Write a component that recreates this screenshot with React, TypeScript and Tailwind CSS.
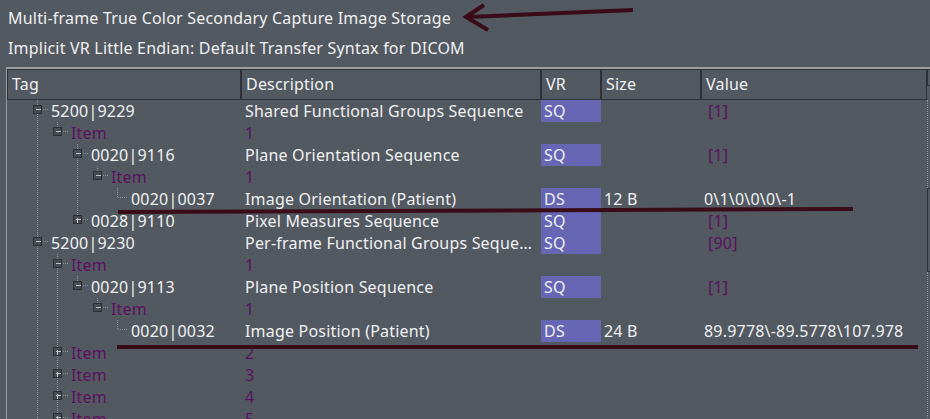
type Kind = 'open' | 'closed' | 'leaf';

type Row = {
  level: number;
  kind: Kind;
  more: boolean; // has later siblings
  guides: boolean[]; // ancestor lines that keep going
  tag: string;
  item?: boolean;
  desc: string;
  vr?: string;
  size?: string;
  value?: string;
  count?: boolean;
};

const ROWS: Row[] = [
  { level: 0, kind: 'open', more: true, guides: [], tag: '5200|9229', desc: 'Shared Functional Groups Sequence', vr: 'SQ', value: '[1]', count: true },
  { level: 1, kind: 'open', more: false, guides: [true], tag: 'Item', item: true, desc: '1' },
  { level: 2, kind: 'open', more: true, guides: [true, false], tag: '0020|9116', desc: 'Plane Orientation Sequence', vr: 'SQ', value: '[1]', count: true },
  { level: 3, kind: 'open', more: false, guides: [true, false, true], tag: 'Item', item: true, desc: '1' },
  { level: 4, kind: 'leaf', more: false, guides: [true, false, true, false], tag: '0020|0037', desc: 'Image Orientation (Patient)', vr: 'DS', size: '12 B', value: '0\\1\\0\\0\\0\\-1' },
  { level: 2, kind: 'closed', more: false, guides: [true, false], tag: '0028|9110', desc: 'Pixel Measures Sequence', vr: 'SQ', value: '[1]', count: true },
  { level: 0, kind: 'open', more: true, guides: [], tag: '5200|9230', desc: 'Per-frame Functional Groups Seque…', vr: 'SQ', value: '[90]', count: true },
  { level: 1, kind: 'open', more: true, guides: [true], tag: 'Item', item: true, desc: '1' },
  { level: 2, kind: 'open', more: false, guides: [true, true], tag: '0020|9113', desc: 'Plane Position Sequence', vr: 'SQ', value: '[1]', count: true },
  { level: 3, kind: 'open', more: false, guides: [true, true, false], tag: 'Item', item: true, desc: '1' },
  { level: 4, kind: 'leaf', more: false, guides: [true, true, false, false], tag: '0020|0032', desc: 'Image Position (Patient)', vr: 'DS', size: '24 B', value: '89.9778\\-89.5778\\107.978' },
  { level: 1, kind: 'closed', more: true, guides: [true], tag: 'Item', item: true, desc: '2' },
  { level: 1, kind: 'closed', more: true, guides: [true], tag: 'Item', item: true, desc: '3' },
  { level: 1, kind: 'closed', more: true, guides: [true], tag: 'Item', item: true, desc: '4' },
  { level: 1, kind: 'closed', more: true, guides: [true], tag: 'Item', item: true, desc: '5' },
];

const LINE = '#8d9298';

function Branch({ row }: { row: Row }) {
  const w = 44 + row.level * 20;
  const cx = 30.5 + row.level * 20;
  const cy = 9.5;
  const leaf = row.kind === 'leaf';
  return (
    <svg width={w} height={22} className="shrink-0" shapeRendering="crispEdges">
      {row.guides.map((on, j) =>
        on ? (
          <line key={j} x1={30.5 + j * 20} y1={0} x2={30.5 + j * 20} y2={22} stroke={LINE} strokeDasharray="1 1" />
        ) : null,
      )}
      <line x1={cx} y1={0} x2={cx} y2={leaf ? cy : 5} stroke={LINE} strokeDasharray="1 1" />
      {row.more && <line x1={cx} y1={leaf ? cy : 14} x2={cx} y2={22} stroke={LINE} strokeDasharray="1 1" />}
      <line x1={leaf ? cx : cx + 5} y1={cy} x2={cx + 10} y2={cy} stroke={LINE} strokeDasharray="1 1" />
      {!leaf && (
        <>
          <rect x={cx - 4} y={cy - 4} width={8} height={8} fill="#474c53" stroke="#2b2f34" />
          <line x1={cx - 2} y1={cy} x2={cx + 3} y2={cy} stroke="#c3c7cb" />
          {row.kind === 'closed' && <line x1={cx} y1={cy - 2} x2={cx} y2={cy + 3} stroke="#c3c7cb" />}
        </>
      )}
    </svg>
  );
}

function TreeRow({ row }: { row: Row }) {
  const purple = 'text-[#5b1160]';
  return (
    <div className="flex h-[22px] items-center whitespace-nowrap leading-[22px]">
      <div className="flex w-[234px] shrink-0 items-center overflow-hidden">
        <Branch row={row} />
        <span className={row.item ? purple : ''}>{row.tag}</span>
      </div>
      <div className={`w-[300px] shrink-0 overflow-hidden pl-[4px] ${row.item ? purple : ''}`}>{row.desc}</div>
      <div className={`h-[22px] w-[60px] shrink-0 pl-[3px] ${row.vr ? 'bg-[#6666b4]' : ''}`}>{row.vr}</div>
      <div className="w-[100px] shrink-0 pl-[3px]">{row.size}</div>
      <div className={`w-[226px] shrink-0 ${row.count ? `pl-[7px] ${purple}` : 'pl-[3px]'}`}>{row.value}</div>
    </div>
  );
}

const HEAD = [
  { label: 'Tag', w: 'w-[234px]' },
  { label: 'Description', w: 'w-[300px]' },
  { label: 'VR', w: 'w-[60px]' },
  { label: 'Size', w: 'w-[100px]' },
  { label: 'Value', w: 'w-[226px]' },
];

export default function App() {
  return (
    <div
      className="relative h-[419px] w-[930px] overflow-hidden bg-[#535961] text-[16px] tracking-[0.2px] text-[#eff0f1]"
      style={{ fontFamily: '"Noto Sans", "Open Sans", sans-serif' }}
    >
      {/* Header lines */}
      <div className="pl-2 pt-2">
        <p className="h-5 leading-5">Multi-frame True Color Secondary Capture Image Storage</p>
        <p className="mt-[10px] h-5 leading-5">Implicit VR Little Endian: Default Transfer Syntax for DICOM</p>
      </div>

      {/* Table */}
      <div className="ml-[6px] mt-[9px] flex border-l border-t-2 border-[#9a9ea3]">
        <div className="flex flex-col">
          <div className="flex h-[31px]">
            {HEAD.map((h) => (
              <div
                key={h.label}
                className={`${h.w} flex shrink-0 items-center border border-[#2e3237] pb-[1px] pl-[4px]`}
              >
                {h.label}
              </div>
            ))}
          </div>
          {ROWS.map((row, i) => (
            <TreeRow key={i} row={row} />
          ))}
        </div>

        {/* Scrollbar */}
        <div className="flex w-[3px] flex-col">
          <div className="h-[17px] border border-r-0 border-[#2e3237]" />
          <div className="mt-[14px] h-[88px] border-l border-dotted border-[#8d9298]" />
          <div className="h-[84px] border border-r-0 border-[#2e3237]" />
          <div className="flex-1 border-l border-dotted border-[#8d9298]" />
        </div>
      </div>

      {/* Hand-drawn annotations */}
      <svg className="pointer-events-none absolute left-0 top-0" width={930} height={419}>
        <g stroke="#3a0c17" strokeWidth={4} strokeLinecap="butt" fill="none">
          <line x1={633} y1={10} x2={467} y2={17} />
          <polyline points="484,5 466,17 488,30" strokeLinejoin="miter" />
          <line x1={118} y1={212} x2={853} y2={209} />
          <line x1={117} y1={347} x2={918} y2={347} />
        </g>
      </svg>
    </div>
  );
}
